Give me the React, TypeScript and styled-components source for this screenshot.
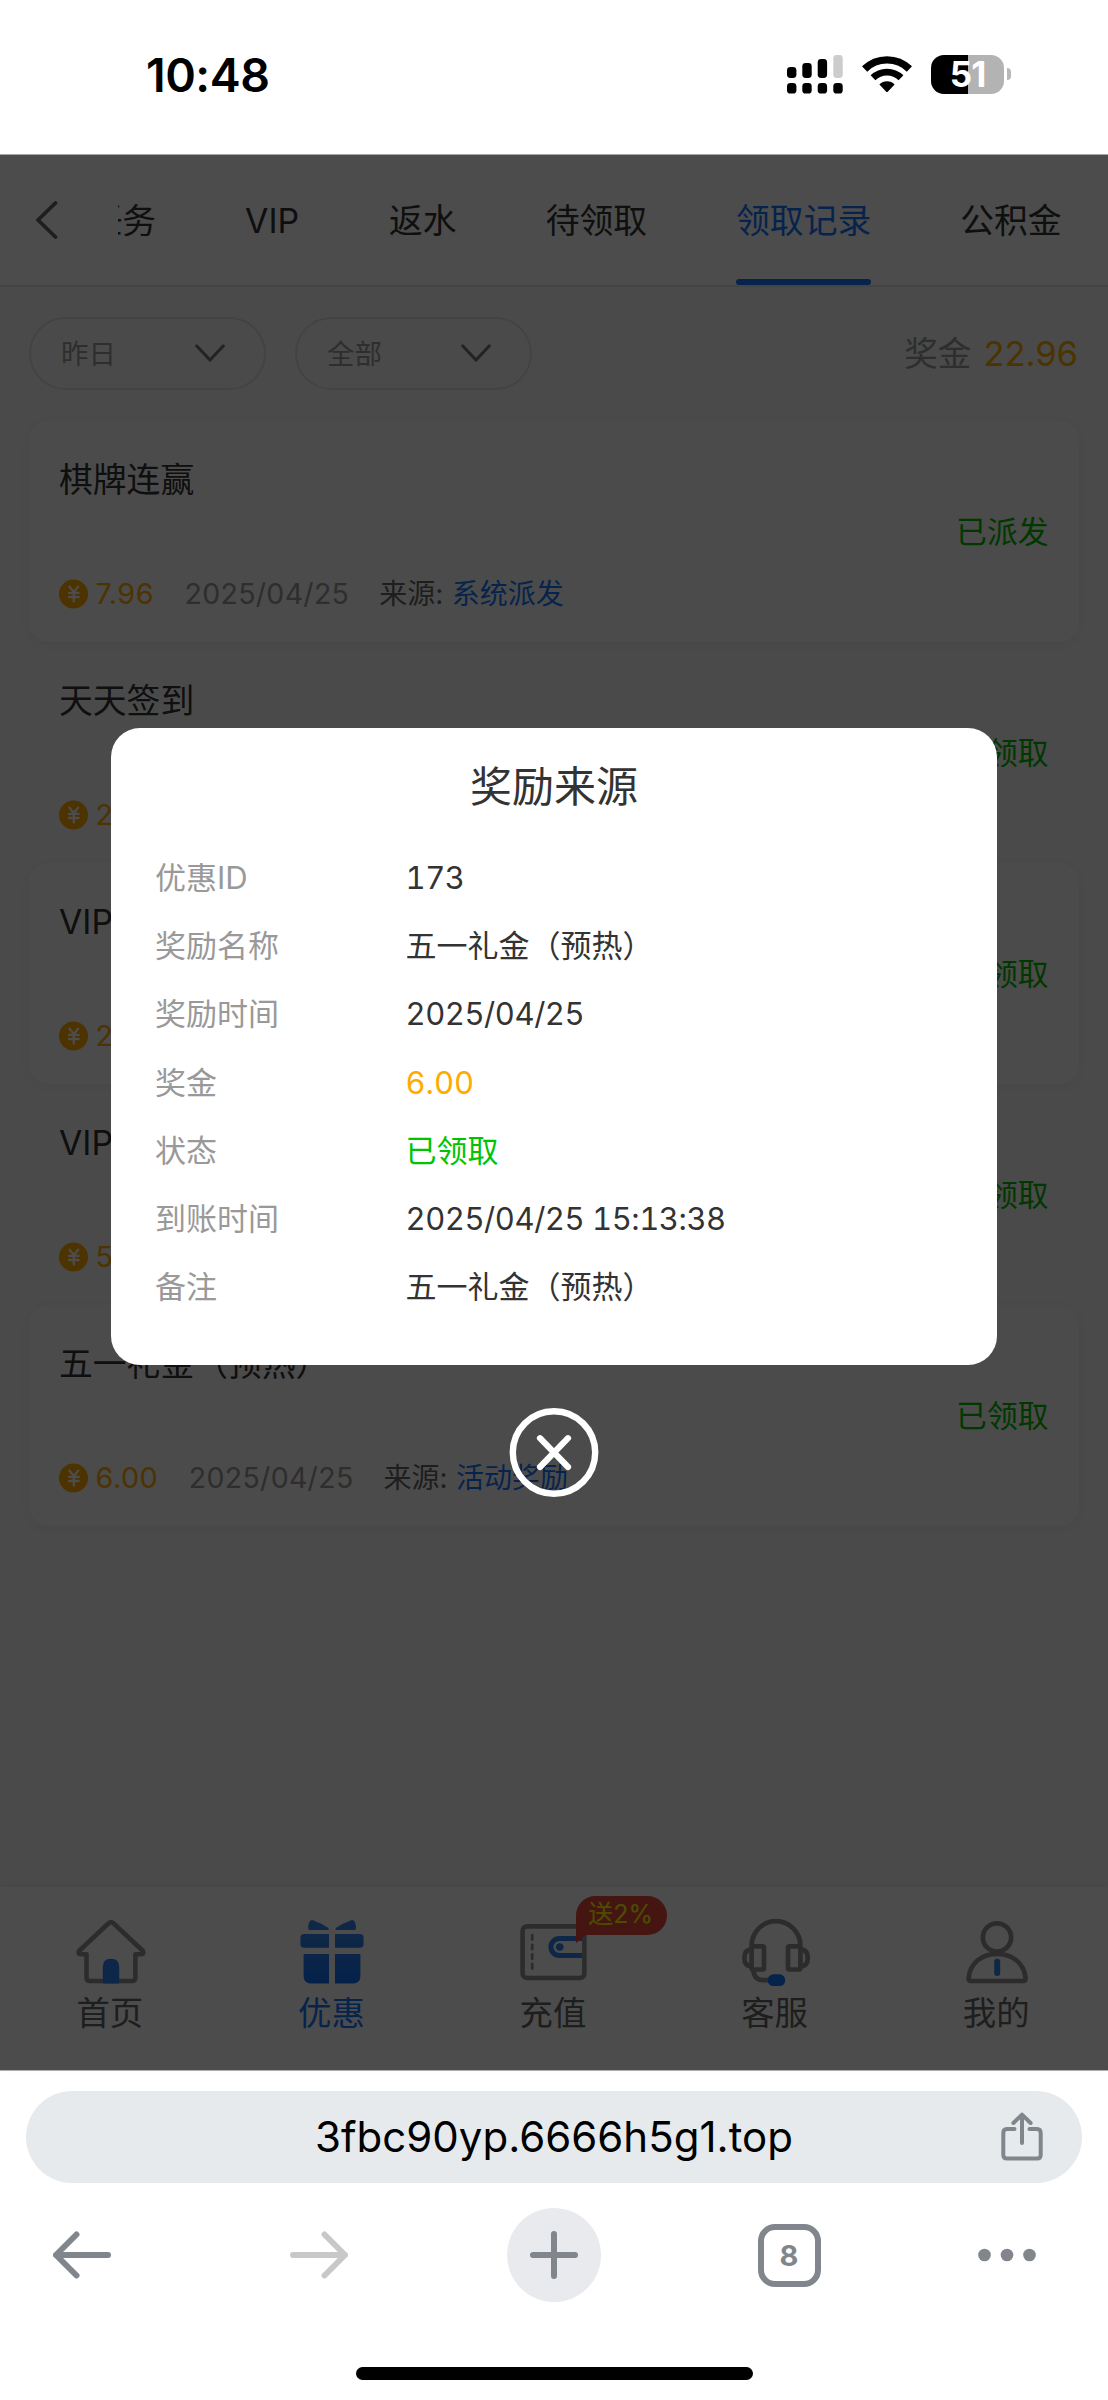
import React from "react";
import styled, { createGlobalStyle } from "styled-components";

const GlobalStyle = createGlobalStyle`
  * { box-sizing: border-box; }
  body {
    margin: 0;
    background: #fff;
    font-family: Inter, "Noto Sans CJK SC", sans-serif;
    color: #333;
  }
  svg { display: block; flex: none; }
`;

const BLUE = "#1677ff";
const ORANGE = "#ffaa00";
const GREEN = "#00bb00";

const Screen = styled.div`
  width: 1108px;
  height: 2400px;
  display: flex;
  flex-direction: column;
  overflow: hidden;
`;

/* ---------- system status bar ---------- */

const StatusBar = styled.header`
  height: 155px;
  flex: none;
  padding: 0 97px 6px 146px;
  border-bottom: 1px solid #a4a8a8;
  display: flex;
  align-items: center;
  justify-content: space-between;
`;

const Clock = styled.span`
  padding-top: 2px;
  font-size: 46.5px;
  font-weight: 600;
  line-height: 56px;
  color: #000;
  letter-spacing: -0.5px;
`;

const Indicators = styled.div`
  display: flex;
  align-items: center;
  gap: 19px;
`;

const BatteryBox = styled.div`
  display: flex;
  align-items: center;
  gap: 3px;
`;

const BatteryBody = styled.div`
  width: 73px;
  height: 39px;
  border-radius: 13px;
  background: linear-gradient(90deg, #000 37px, #b3b3b3 37px);
  color: #fff;
  font-size: 35px;
  font-weight: 700;
  line-height: 39px;
  letter-spacing: -1px;
  text-align: center;
`;

const BatteryTip = styled.div`
  width: 4px;
  height: 12px;
  border-radius: 0 5px 5px 0;
  background: #b8b8b8;
`;

/* ---------- site ---------- */

const Site = styled.main`
  position: relative;
  height: 1916px;
  flex: none;
  display: flex;
  flex-direction: column;
  background: #f8f8f8;
  border-bottom: 1px solid #b0b0b0;
`;

const TopNav = styled.nav`
  height: 132px;
  flex: none;
  display: flex;
  align-items: center;
  background: #fdfdfd;
  border-bottom: 2px solid #e4e4e4;
`;

const BackSlot = styled.div`
  width: 118px;
  flex: none;
  padding-left: 34px;
`;

const TabScroller = styled.div`
  flex: 1;
  height: 130px;
  display: flex;
  gap: 89px;
  overflow: hidden;
`;

const Tab = styled.div<{ $active?: boolean; $shift?: number }>`
  position: relative;
  flex: none;
  height: 130px;
  margin-left: ${(p) => p.$shift ?? 0}px;
  font-size: 33.8px;
  line-height: 132px;
  white-space: nowrap;
  color: ${(p) => (p.$active ? BLUE : "#333")};
  &::after {
    content: "";
    position: absolute;
    left: 0;
    right: 0;
    bottom: 0;
    height: 6px;
    border-radius: 3px;
    background: ${(p) => (p.$active ? BLUE : "transparent")};
  }
`;

const Filters = styled.div`
  height: 134px;
  flex: none;
  padding: 30px 30px 31px 29px;
  display: flex;
  align-items: center;
  gap: 29px;
`;

const Select = styled.div`
  width: 237px;
  height: 73px;
  border: 2px solid #e0e0e0;
  border-radius: 37px;
  padding: 0 39.5px 0 30px;
  display: flex;
  align-items: center;
  justify-content: space-between;
  background: #f9f9f9;
  color: #999;
  font-size: 27.5px;
  line-height: 40px;
`;

const Total = styled.div`
  margin-left: auto;
  display: flex;
  align-items: center;
  gap: 12px;
  color: #999;
  font-size: 33.6px;
  line-height: 44px;
  strong {
    font-weight: 400;
    font-size: 34.5px;
    color: ${ORANGE};
  }
`;

const List = styled.div`
  flex: 1;
  padding: 0 29px;
`;

const Card = styled.article<{ $raised: boolean }>`
  height: 221px;
  padding: 41px 30.5px 32px 30px;
  border-radius: 20px;
  display: flex;
  align-items: stretch;
  justify-content: space-between;
  background: ${(p) => (p.$raised ? "#fcfcfc" : "transparent")};
  box-shadow: ${(p) => (p.$raised ? "0 2px 12px rgba(100, 130, 180, 0.1)" : "none")};
`;

const CardMain = styled.div`
  display: flex;
  flex-direction: column;
  justify-content: space-between;
`;

const CardTitle = styled.div`
  font-size: 33.8px;
  line-height: 36px;
`;

const CardMeta = styled.div`
  display: flex;
  align-items: center;
  font-size: 28px;
  line-height: 32px;
`;

const Amount = styled.span`
  margin-left: 7.5px;
  color: ${ORANGE};
  font-size: 28.8px;
  letter-spacing: 0.5px;
`;

const DateText = styled.span`
  margin-left: 30.5px;
  color: #999;
  font-size: 28.5px;
  letter-spacing: 0.3px;
`;

const Source = styled.span`
  margin-left: 30px;
  color: #666;
  em {
    margin-left: 8.5px;
    font-style: normal;
    color: ${BLUE};
  }
`;

const Status = styled.span`
  align-self: center;
  margin-bottom: 8px;
  color: ${GREEN};
  font-size: 30.8px;
  line-height: 40px;
`;

const TabBar = styled.footer`
  height: 183px;
  flex: none;
  display: flex;
  background: #fdfdfd;
  box-shadow: 0 -2px 8px rgba(0, 0, 0, 0.05);
`;

const TabItem = styled.div<{ $active?: boolean }>`
  position: relative;
  flex: 1;
  padding-top: 28px;
  display: flex;
  flex-direction: column;
  align-items: center;
  font-size: 33.4px;
  line-height: 40px;
  color: ${(p) => (p.$active ? BLUE : "#666")};
`;

const TabLabel = styled.span`
  margin-top: -2px;
  padding-right: 2px;
`;

const Badge = styled.div`
  position: absolute;
  left: 132.5px;
  top: 9px;
  width: 91px;
  height: 39px;
  border-radius: 20px 20px 20px 0;
  background: #e8493c;
  color: #ffff00;
  font-size: 25px;
  line-height: 36px;
  padding-left: 12.5px;
  white-space: nowrap;
  &::after {
    content: "";
    position: absolute;
    left: 0;
    top: 38px;
    border-top: 9px solid #e8493c;
    border-right: 11px solid transparent;
  }
`;

/* ---------- dialog ---------- */

const Overlay = styled.div`
  position: absolute;
  inset: 0;
  padding-top: 573px;
  display: flex;
  flex-direction: column;
  align-items: center;
  background: rgba(0, 0, 0, 0.7);
`;

const Dialog = styled.section`
  width: 886px;
  height: 637px;
  flex: none;
  padding: 34px 44px 0;
  border-radius: 29px;
  background: #fff;
`;

const DialogTitle = styled.h2`
  margin: 0 0 32px;
  text-align: center;
  font-size: 42px;
  font-weight: 400;
  line-height: 50px;
`;

const Field = styled.div`
  display: flex;
  height: 68.2px;
  align-items: center;
  font-size: 31px;
  line-height: 40px;
`;

const FieldLabel = styled.span`
  width: 250.5px;
  color: #999;
`;

const FieldValue = styled.span<{ $color?: string; $numeric?: boolean }>`
  color: ${(p) => p.$color ?? "#333"};
  font-variant-numeric: tabular-nums;
  letter-spacing: ${(p) => (p.$numeric ? "-0.45px" : "0")};
`;

const CloseButton = styled.button`
  margin: 42px 0 0;
  padding: 0;
  border: 0;
  background: none;
`;

/* ---------- browser chrome ---------- */

const Browser = styled.footer`
  flex: 1;
  padding: 20px 26px 0;
  display: flex;
  flex-direction: column;
  align-items: center;
  background: #fff;
`;

const AddressBar = styled.div`
  width: 1056px;
  height: 92px;
  flex: none;
  border-radius: 46px;
  background: #e6eaed;
  display: grid;
  grid-template-columns: 120px 1fr 120px;
  align-items: center;
  justify-items: center;
  color: #000;
  font-size: 42px;
  line-height: 50px;
`;

const Toolbar = styled.div`
  width: 1056px;
  height: 94px;
  margin-top: 25px;
  flex: none;
  display: flex;
  align-items: center;
  gap: 157px;
  padding-left: 27px;
`;

const ForwardSlot = styled.div`
  margin-left: 21.5px;
`;

const NewTab = styled.div`
  width: 94px;
  height: 94px;
  flex: none;
  margin-left: 2px;
  border-radius: 50%;
  background: #e8eaed;
  display: flex;
  align-items: center;
  justify-content: center;
`;

const TabCount = styled.div`
  width: 63px;
  height: 63px;
  flex: none;
  border: 6px solid #80868b;
  border-radius: 17px;
  color: #80868b;
  font-size: 29px;
  font-weight: 700;
  line-height: 52px;
  text-align: center;
`;

const HomeIndicator = styled.div`
  width: 397px;
  height: 13px;
  margin-top: 64.5px;
  border-radius: 7px;
  background: #000;
`;

/* ---------- icons ---------- */

const SignalIcon = () => (
  <svg width="56" height="39" viewBox="0 0 56 39">
    <rect x="0" y="12" width="9.4" height="11" rx="3.4" />
    <rect x="15.3" y="8" width="9.4" height="15" rx="3.4" />
    <rect x="30.7" y="4" width="9.4" height="19" rx="3.4" />
    <rect x="46.3" y="0" width="9.4" height="23" rx="3.4" fill="#ccc" />
    {[0, 15.3, 30.7, 46.3].map((x) => (
      <rect key={x} x={x} y="28" width="9.4" height="10.6" rx="3.4" />
    ))}
  </svg>
);

const WifiIcon = () => (
  <svg width="50" height="37" viewBox="0 0 50 37">
    <path d="M2.6 13 A32 32 0 0 1 47.4 13" fill="none" stroke="#000" strokeWidth="7.4" />
    <path d="M11 21.8 A20 20 0 0 1 39 21.8" fill="none" stroke="#000" strokeWidth="6.8" />
    <path d="M17.4 28.4 A10.8 10.8 0 0 1 32.6 28.4 L26 35.6 Q25 36.6 24 35.6 Z" />
  </svg>
);

const BackIcon = () => (
  <svg width="24" height="38" viewBox="0 0 24 38">
    <path d="M21.5 2 L4 19 L21.5 36" fill="none" stroke="#666" strokeWidth="3.8" strokeLinecap="round" strokeLinejoin="round" />
  </svg>
);

const ChevronIcon = () => (
  <svg width="30" height="19" viewBox="0 0 30 19">
    <path d="M1.8 2 L15 16 L28.2 2" fill="none" stroke="#777" strokeWidth="3.2" strokeLinecap="round" strokeLinejoin="round" />
  </svg>
);

const CoinIcon = () => (
  <svg width="29" height="30" viewBox="0 0 29 30">
    <circle cx="14.5" cy="15" r="14.5" fill={ORANGE} />
    <path
      d="M10.3 7.6 L14.8 13 L19.3 7.6 M14.8 13 V22.6 M10 13.9 H19.6 M10 18 H19.6"
      fill="none"
      stroke="#fff"
      strokeWidth="2.3"
      strokeLinecap="round"
    />
  </svg>
);

const GRAY = "#949494";

const HomeIcon = () => (
  <svg width="80" height="80" viewBox="0 0 80 80">
    <path
      d="M37.6 8.2 Q40 6.2 42.4 8.2 L72 36 Q73.5 39 70 39.2 H64.4 V62.5 Q64.4 66 61 66 H19 Q15.5 66 15.5 62.5 V39.2 H9.5 Q6.5 39 8 36 Z"
      fill="none"
      stroke={GRAY}
      strokeWidth="4.6"
      strokeLinejoin="round"
    />
    <path d="M31.8 68.4 V52 Q31.8 43.8 40 43.8 Q48.2 43.8 48.2 52 V68.4 Z" fill="#2f80ee" />
  </svg>
);

const GiftIcon = () => (
  <svg width="80" height="80" viewBox="0 0 80 80">
    <defs>
      <linearGradient id="gift" x1="0" y1="0" x2="0" y2="80" gradientUnits="userSpaceOnUse">
        <stop offset="0.2" stopColor="#3888ee" />
        <stop offset="0.85" stopColor="#1070f5" />
      </linearGradient>
    </defs>
    <g fill="url(#gift)">
      <path d="M17.6 15 Q16.2 15 16.2 13 Q16.2 8 18.6 5.6 Q19.6 4.6 21 5.2 Q30 8.4 36.4 13 Q37.4 15 35.4 15 Z" />
      <path d="M62.6 15 Q64 15 64 13 Q64 8 61.6 5.6 Q60.6 4.6 59.2 5.2 Q50 8.4 43.8 13 Q42.8 15 44.8 15 Z" />
      <path d="M37 19 V32.8 H12 Q8.4 32.8 8.4 29 V23 Q8.4 19 12 19 Z" />
      <path d="M43 19 V32.8 H68 Q71.6 32.8 71.6 29 V23 Q71.6 19 68 19 Z" />
      <path d="M11.6 39 H37 V68.4 H18 Q11.6 67.6 11.6 61 Z" />
      <path d="M68.4 39 H43 V68.4 H62 Q68.4 67.6 68.4 61 Z" />
    </g>
  </svg>
);

const WalletIcon = () => (
  <svg width="80" height="80" viewBox="0 0 80 80">
    <rect x="8.6" y="11.4" width="61.8" height="51.6" rx="4.5" fill="none" stroke={GRAY} strokeWidth="4.6" />
    <path d="M18.2 20.2 V54" stroke={GRAY} strokeWidth="2.8" strokeDasharray="4.4 5.2" strokeLinecap="round" />
    <path d="M68.2 23.4 H45.5 A8.6 8.6 0 0 0 45.5 40.6 H68.2" fill="none" stroke="#2f80ee" strokeWidth="5" />
    <circle cx="45.8" cy="32" r="3.8" fill="#2f80ee" />
  </svg>
);

const HeadsetIcon = () => (
  <svg width="80" height="80" viewBox="0 0 80 80">
    <g fill="none" stroke={GRAY} strokeWidth="4.7">
      <path d="M15.6 31 A24.4 24.8 0 0 1 64.4 31" />
      <rect x="15.6" y="31.3" width="12.4" height="23.2" rx="1.5" />
      <rect x="52" y="31.3" width="12.4" height="23.2" rx="1.5" />
      <path d="M15.6 34.4 Q8.4 34.6 8.4 43 Q8.4 51.2 15.6 51.4" />
      <path d="M64.4 34.4 Q71.8 34.6 71.8 43 Q71.8 51.2 64.4 51.4" />
      <path d="M17.2 55 Q18.4 65.2 27 65.2 H34" />
    </g>
    <rect x="31.8" y="59.3" width="17.4" height="11.8" rx="5.6" fill="#1677ff" />
  </svg>
);

const UserIcon = () => (
  <svg width="80" height="80" viewBox="0 0 80 80">
    <g fill="none" stroke={GRAY} strokeWidth="4.7" strokeLinejoin="round">
      <circle cx="40" cy="22.4" r="14.1" />
      <path d="M14 66 Q11.4 66 11.6 63 C13 48 25 38.8 40 38.8 C55 38.8 67 48 68.6 63 Q68.6 66 66 66 Z" />
    </g>
    <path d="M40.2 46.8 V58" stroke="#2f80ee" strokeWidth="6" strokeLinecap="round" />
  </svg>
);

const CloseIcon = () => (
  <svg width="90" height="90" viewBox="0 0 90 90" fill="none" stroke="#fff">
    <circle cx="45" cy="45.5" r="41.2" strokeWidth="6.4" />
    <path d="M31 31.2 L59 60 M59 31.2 L31 60" strokeWidth="6.2" strokeLinecap="round" />
  </svg>
);

const ShareIcon = () => (
  <svg width="44" height="50" viewBox="0 0 44 50" fill="none" stroke="#80868b" strokeWidth="4" strokeLinecap="round" strokeLinejoin="round">
    <path d="M14.5 17 H7 Q3.3 17 3.3 21 V43 Q3.3 46.6 7 46.6 H37 Q40.7 46.6 40.7 43 V21 Q40.7 17 37 17 H29.5" />
    <path d="M22 31 V3 M13.4 11 L22 2.6 L30.6 11" />
  </svg>
);

const ArrowIcon = ({ forward }: { forward?: boolean }) => (
  <svg width="58" height="50" viewBox="0 0 58 50" fill="none" stroke={forward ? "#c8c8c8" : "#80868b"} strokeWidth="6" strokeLinecap="round" strokeLinejoin="round">
    <path d={forward ? "M3 25 H55 M34.5 4.5 L55 25 L34.5 45.5" : "M55 25 H3 M23.5 4.5 L3 25 L23.5 45.5"} />
  </svg>
);

const PlusIcon = () => (
  <svg width="50" height="50" viewBox="0 0 50 50" stroke="#80868b" strokeWidth="6" strokeLinecap="round">
    <path d="M4 25 H46 M25 4 V46" />
  </svg>
);

const DotsIcon = () => (
  <svg width="58" height="14" viewBox="0 0 58 14" fill="#80868b">
    <circle cx="6.5" cy="7" r="6.3" />
    <circle cx="29" cy="7" r="6.3" />
    <circle cx="51.5" cy="7" r="6.3" />
  </svg>
);

/* ---------- data ---------- */

const tabs = ["任务", "VIP", "返水", "待领取", "领取记录", "公积金"];

const records = [
  { title: "棋牌连赢", amount: "7.96", source: "系统派发", status: "已派发" },
  { title: "天天签到", amount: "2.00", source: "活动奖励", status: "已领取" },
  { title: "VIP", amount: "2.00", source: "活动奖励", status: "已领取" },
  { title: "VIP", amount: "5.00", source: "活动奖励", status: "已领取" },
  { title: "五一礼金（预热）", amount: "6.00", source: "活动奖励", status: "已领取" },
];

const fields = [
  { label: "优惠ID", value: "173", numeric: true },
  { label: "奖励名称", value: "五一礼金（预热）" },
  { label: "奖励时间", value: "2025/04/25", numeric: true },
  { label: "奖金", value: "6.00", color: ORANGE },
  { label: "状态", value: "已领取", color: "#00c400" },
  { label: "到账时间", value: "2025/04/25 15:13:38", numeric: true },
  { label: "备注", value: "五一礼金（预热）" },
];

const menu = [
  { label: "首页", icon: <HomeIcon /> },
  { label: "优惠", icon: <GiftIcon />, active: true },
  { label: "充值", icon: <WalletIcon />, badge: "送2%" },
  { label: "客服", icon: <HeadsetIcon /> },
  { label: "我的", icon: <UserIcon /> },
];

export default function App() {
  return (
    <Screen>
      <GlobalStyle />
      <StatusBar>
        <Clock>10:48</Clock>
        <Indicators>
          <SignalIcon />
          <WifiIcon />
          <BatteryBox>
            <BatteryBody>51</BatteryBody>
            <BatteryTip />
          </BatteryBox>
        </Indicators>
      </StatusBar>

      <Site>
        <TopNav>
          <BackSlot>
            <BackIcon />
          </BackSlot>
          <TabScroller>
            {tabs.map((t, i) => (
              <Tab key={t} $active={t === "领取记录"} $shift={i === 0 ? -29.5 : i === 2 ? 1 : 0}>
                {t}
              </Tab>
            ))}
          </TabScroller>
        </TopNav>

        <Filters>
          <Select>
            昨日
            <ChevronIcon />
          </Select>
          <Select>
            全部
            <ChevronIcon />
          </Select>
          <Total>
            奖金<strong>22.96</strong>
          </Total>
        </Filters>

        <List>
          {records.map((r, i) => (
            <Card key={i} $raised={i % 2 === 0}>
              <CardMain>
                <CardTitle>{r.title}</CardTitle>
                <CardMeta>
                  <CoinIcon />
                  <Amount>{r.amount}</Amount>
                  <DateText>2025/04/25</DateText>
                  <Source>
                    来源:<em>{r.source}</em>
                  </Source>
                </CardMeta>
              </CardMain>
              <Status>{r.status}</Status>
            </Card>
          ))}
        </List>

        <TabBar>
          {menu.map((m) => (
            <TabItem key={m.label} $active={m.active}>
              {m.icon}
              <TabLabel>{m.label}</TabLabel>
              {m.badge && <Badge>{m.badge}</Badge>}
            </TabItem>
          ))}
        </TabBar>

        <Overlay>
          <Dialog>
            <DialogTitle>奖励来源</DialogTitle>
            {fields.map((f) => (
              <Field key={f.label}>
                <FieldLabel>{f.label}</FieldLabel>
                <FieldValue $color={f.color} $numeric={f.numeric}>
                  {f.value}
                </FieldValue>
              </Field>
            ))}
          </Dialog>
          <CloseButton>
            <CloseIcon />
          </CloseButton>
        </Overlay>
      </Site>

      <Browser>
        <AddressBar>
          <span />
          <span>3fbc90yp.6666h5g1.top</span>
          <ShareIcon />
        </AddressBar>
        <Toolbar>
          <ArrowIcon />
          <ForwardSlot>
            <ArrowIcon forward />
          </ForwardSlot>
          <NewTab>
            <PlusIcon />
          </NewTab>
          <TabCount>8</TabCount>
          <DotsIcon />
        </Toolbar>
        <HomeIndicator />
      </Browser>
    </Screen>
  );
}
